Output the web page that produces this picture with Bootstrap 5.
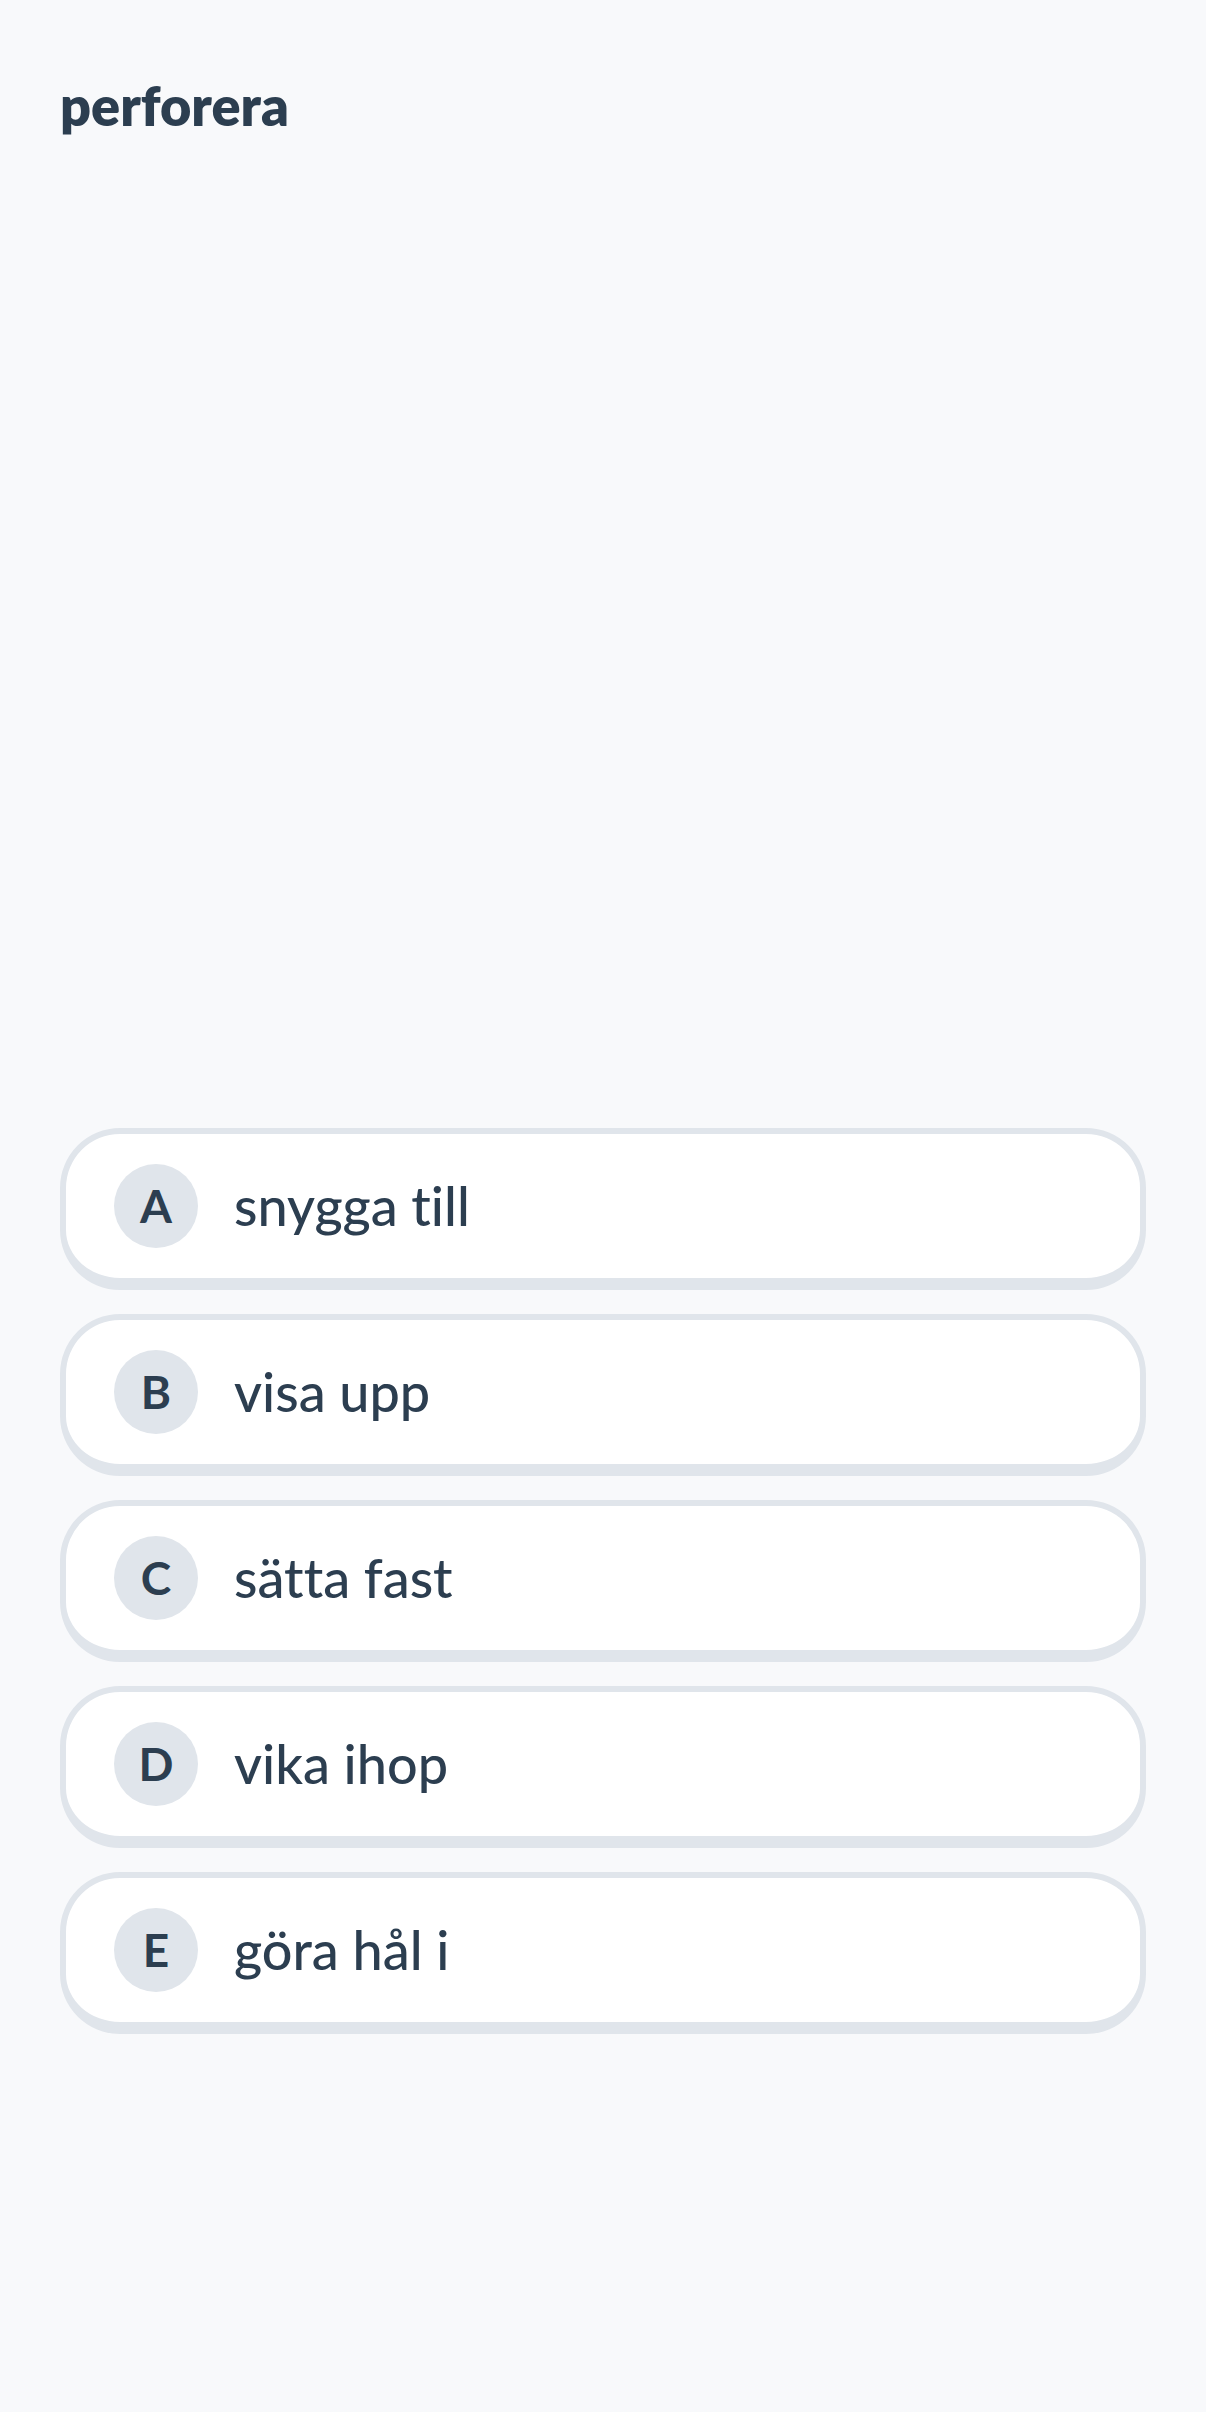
<!DOCTYPE html>
<html lang="sv">
<head>
  <meta charset="UTF-8">
  <meta name="viewport" content="width=device-width, initial-scale=1">
  <title>perforera</title>
  <link href="https://cdn.jsdelivr.net/npm/bootstrap@5.3.3/dist/css/bootstrap.min.css" rel="stylesheet">
  <style>
    body {
      font-family: Lato, sans-serif;
      font-variant-ligatures: none;
      background-color: #f8f9fb;
      color: #2c3e50;
    }
    .quiz-page {
      padding: 70px 60px 378px;
    }
    .quiz-word {
      font-size: 54px;
      font-weight: 800;
      line-height: 72px;
    }
    .answer-list {
      gap: 24px;
    }
    .answer-btn {
      gap: 36px;
      padding: 30px 48px;
      background-color: #fff;
      border: 6px solid #e0e5eb;
      border-bottom-width: 12px;
      border-radius: 60px;
      color: #2c3e50;
      font-size: 54px;
      font-weight: 500;
      font-variant-ligatures: none;
      line-height: 72px;
    }
    .answer-letter {
      width: 84px;
      height: 84px;
      background-color: #e0e5eb;
      font-size: 46px;
    }
  </style>
</head>
<body>
  <main class="quiz-page d-flex flex-column min-vh-100">
    <h1 class="quiz-word flex-grow-1 m-0">perforera</h1>

    <div class="answer-list d-flex flex-column">
      <button type="button" class="answer-btn d-flex align-items-center w-100 text-start">
        <span class="answer-letter d-flex align-items-center justify-content-center flex-shrink-0 rounded-circle fw-bold">A</span>
        <span>snygga till</span>
      </button>
      <button type="button" class="answer-btn d-flex align-items-center w-100 text-start">
        <span class="answer-letter d-flex align-items-center justify-content-center flex-shrink-0 rounded-circle fw-bold">B</span>
        <span>visa upp</span>
      </button>
      <button type="button" class="answer-btn d-flex align-items-center w-100 text-start">
        <span class="answer-letter d-flex align-items-center justify-content-center flex-shrink-0 rounded-circle fw-bold">C</span>
        <span>sätta fast</span>
      </button>
      <button type="button" class="answer-btn d-flex align-items-center w-100 text-start">
        <span class="answer-letter d-flex align-items-center justify-content-center flex-shrink-0 rounded-circle fw-bold">D</span>
        <span>vika ihop</span>
      </button>
      <button type="button" class="answer-btn d-flex align-items-center w-100 text-start">
        <span class="answer-letter d-flex align-items-center justify-content-center flex-shrink-0 rounded-circle fw-bold">E</span>
        <span>göra hål i</span>
      </button>
    </div>
  </main>

  <script src="https://cdn.jsdelivr.net/npm/bootstrap@5.3.3/dist/js/bootstrap.bundle.min.js"></script>
</body>
</html>
